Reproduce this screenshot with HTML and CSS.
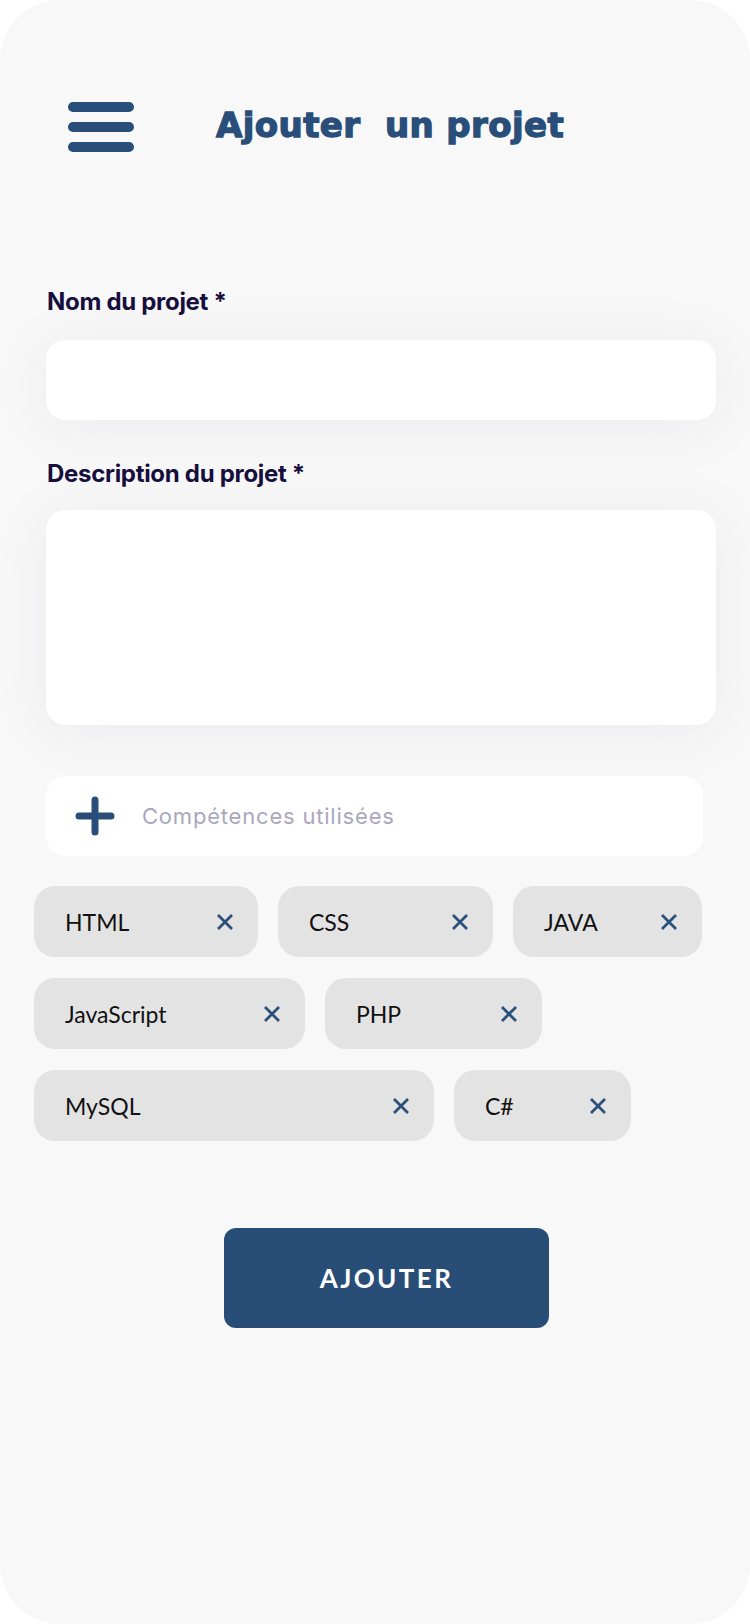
FILE: index.html
```html
<!DOCTYPE html>
<html lang="fr">
<head>
<meta charset="utf-8">
<title>Ajouter un projet</title>
<link rel="stylesheet" href="styles.css">
</head>
<body>
<div class="frame">
  <header class="header">
    <button class="burger" aria-label="Menu">
      <span class="bar"></span><span class="bar"></span><span class="bar"></span>
    </button>
    <h1 class="title">Ajouter&nbsp; un projet</h1>
  </header>

  <form class="form">
    <label class="label">Nom du projet *</label>
    <input class="field" type="text">

    <label class="label label-desc">Description du projet *</label>
    <textarea class="field area"></textarea>

    <div class="skill-input">
      <svg class="plus" viewBox="0 0 40 40" width="40" height="40">
        <path d="M20 4 V36 M4 20 H36" stroke="#294e79" stroke-width="7" stroke-linecap="round" fill="none"/>
      </svg>
      <input class="skill-field" type="text" placeholder="Compétences utilisées">
    </div>
  </form>

  <div class="chips">
    <div class="chip" style="width:224px"><span>HTML</span><svg class="x" viewBox="0 0 18 18"><path d="M2 2 L16 16 M16 2 L2 16"/></svg></div>
    <div class="chip" style="width:215px"><span>CSS</span><svg class="x" viewBox="0 0 18 18"><path d="M2 2 L16 16 M16 2 L2 16"/></svg></div>
    <div class="chip" style="width:189px"><span>JAVA</span><svg class="x" viewBox="0 0 18 18"><path d="M2 2 L16 16 M16 2 L2 16"/></svg></div>
    <div class="chip" style="width:271px"><span>JavaScript</span><svg class="x" viewBox="0 0 18 18"><path d="M2 2 L16 16 M16 2 L2 16"/></svg></div>
    <div class="chip" style="width:217px"><span>PHP</span><svg class="x" viewBox="0 0 18 18"><path d="M2 2 L16 16 M16 2 L2 16"/></svg></div>
    <div class="chip" style="width:400px"><span>MySQL</span><svg class="x" viewBox="0 0 18 18"><path d="M2 2 L16 16 M16 2 L2 16"/></svg></div>
    <div class="chip" style="width:177px"><span>C#</span><svg class="x" viewBox="0 0 18 18"><path d="M2 2 L16 16 M16 2 L2 16"/></svg></div>
  </div>

  <div class="actions">
    <button class="submit" type="button">AJOUTER</button>
  </div>
</div>
</body>
</html>
```

FILE: styles.css
```css
* { box-sizing: border-box; }
html, body { margin: 0; padding: 0; background: #ffffff; }
body { width: 750px; height: 1624px; overflow: hidden; }

.frame {
  width: 750px;
  height: 1624px;
  background: #f8f8f8;
  border-radius: 60px;
  padding-top: 102px;
  overflow: hidden;
}

.header {
  display: flex;
  align-items: center;
  padding-left: 68px;
  height: 50px;
}

.burger {
  width: 66px;
  height: 50px;
  padding: 0;
  border: none;
  background: transparent;
  display: flex;
  flex-direction: column;
  justify-content: space-between;
}
.bar {
  display: block;
  width: 66px;
  height: 10px;
  border-radius: 5px;
  background: #284e79;
}

.title {
  margin: 0 0 0 82px;
  font-family: "DejaVu Sans", Roboto, sans-serif;
  font-weight: 700;
  font-size: 34px;
  line-height: 1;
  letter-spacing: 0.4px;
  color: #284e79;
  -webkit-text-stroke: 1.3px #284e79;
  position: relative;
  top: -2px;
}

.form {
  display: flex;
  flex-direction: column;
  padding: 0 34px 0 46px;
  margin-top: 136px;
}

.label {
  font-family: Inter, "Noto Sans", sans-serif;
  font-weight: 700;
  font-size: 24px;
  line-height: 27px;
  letter-spacing: -0.3px;
  color: #170f3e;
  margin-left: 1px;
}

.field {
  display: block;
  width: 670px;
  height: 80px;
  margin-top: 25px;
  border: none;
  border-radius: 20px;
  background: #ffffff;
  box-shadow: 0 6px 60px rgba(50, 60, 100, 0.07);
  outline: none;
  font-family: Inter, sans-serif;
  font-size: 22px;
  padding: 0 24px;
}

.label-desc { margin-top: 40px; }

.area {
  height: 215px;
  margin-top: 23px;
  resize: none;
}

.skill-input {
  margin-top: 51px;
  width: 657px;
  height: 80px;
  background: #ffffff;
  border-radius: 20px;
  display: flex;
  align-items: center;
  padding-left: 29px;
  gap: 27px;
}
.plus { flex: none; }
.skill-field {
  flex: 1;
  border: none;
  outline: none;
  background: transparent;
  font-family: Inter, "Noto Sans", sans-serif;
  font-size: 22px;
  color: #333;
  padding: 0;
  letter-spacing: 0.8px;
}
.skill-field::placeholder { color: #aaa7c0; }

.chips {
  display: flex;
  flex-wrap: wrap;
  column-gap: 20px;
  row-gap: 21px;
  padding-left: 34px;
  width: 720px;
  margin-top: 30px;
}

.chip {
  height: 71px;
  background: #e3e3e3;
  border-radius: 21px;
  display: flex;
  align-items: center;
  justify-content: space-between;
  padding: 0 24px 0 31px;
  font-family: Lato, "Open Sans", sans-serif;
  font-size: 23px;
  color: #111111;
}
.x {
  width: 18px;
  height: 18px;
  flex: none;
}
.x path {
  stroke: #2b4f7b;
  stroke-width: 2.8;
  stroke-linecap: butt;
  fill: none;
}

.actions {
  padding-left: 224px;
  margin-top: 87px;
}
.submit {
  width: 325px;
  height: 100px;
  border: none;
  border-radius: 12px;
  background: #284e78;
  color: #ffffff;
  font-family: Lato, "Open Sans", sans-serif;
  font-weight: 700;
  font-size: 26px;
  letter-spacing: 2.4px;
  padding: 0 0 0 0;
}
```
